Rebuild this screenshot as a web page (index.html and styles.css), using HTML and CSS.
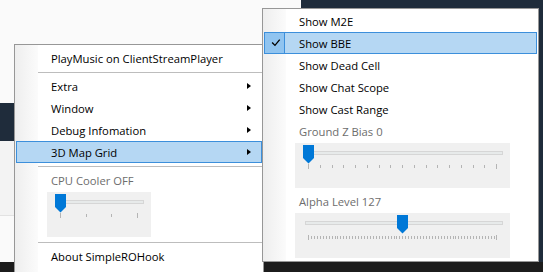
FILE: index.html
```html
<!DOCTYPE html>
<html lang="en">

<head>
	<meta charset="UTF-8">
	<meta name="viewport" content="width=device-width, initial-scale=1.0">
	<title>SimpleROHook menu</title>
	<link rel="stylesheet" href="styles.css">
</head>

<body>
	<div class="desk">
		<!-- windows behind the menus -->
		<div class="bg-band"></div>
		<div class="bg-pane"></div>
		<div class="bg-top"></div>
		<div class="bg-right"></div>
		<div class="bg-bottom"></div>

		<div class="menu main">
			<div class="item">PlayMusic on ClientStreamPlayer</div>
			<div class="sep"></div>
			<div class="item has-sub">Extra<span class="arrow"></span></div>
			<div class="item has-sub">Window<span class="arrow"></span></div>
			<div class="item has-sub">Debug Infomation<span class="arrow"></span></div>
			<div class="item has-sub hot">3D Map Grid<span class="arrow"></span></div>
			<div class="sep"></div>
			<div class="item off">CPU Cooler OFF</div>
			<div class="host">
				<div class="panel small">
					<svg width="104" height="45" viewBox="0 0 104 45">
						<rect class="track" x="10.5" y="8.5" width="86" height="3"></rect>
						<g class="ticks">
							<line x1="13.5" y1="21" x2="13.5" y2="26"></line>
							<line x1="39.5" y1="22" x2="39.5" y2="25"></line>
							<line x1="64.5" y1="22" x2="64.5" y2="25"></line>
							<line x1="90.5" y1="21" x2="90.5" y2="26"></line>
						</g>
						<path class="thumb" d="M8 2 H19 V15 L13.5 20.5 L8 15 Z"></path>
					</svg>
				</div>
			</div>
			<div class="sep"></div>
			<div class="item">About SimpleROHook</div>
		</div>

		<div class="menu submenu">
			<div class="item">Show M2E</div>
			<div class="item hot checked"><span class="check"><svg width="20" height="20" viewBox="0 0 20 20"><path d="M7.5 9.5 L10.5 12.5 L15.5 6.5"></path></svg></span>Show BBE</div>
			<div class="item">Show Dead Cell</div>
			<div class="item">Show Chat Scope</div>
			<div class="item">Show Cast Range</div>
			<div class="item off">Ground Z Bias 0</div>
			<div class="host">
				<div class="panel wide">
					<svg width="215" height="45" viewBox="0 0 215 45">
						<rect class="track" x="10.5" y="8.5" width="197" height="3"></rect>
						<g class="ticks" id="ticks-z"></g>
						<path class="thumb" d="M8 2 H19 V15 L13.5 20.5 L8 15 Z"></path>
					</svg>
				</div>
			</div>
			<div class="item off">Alpha Level 127</div>
			<div class="host">
				<div class="panel wide">
					<svg width="215" height="45" viewBox="0 0 215 45">
						<rect class="track" x="10.5" y="8.5" width="197" height="3"></rect>
						<g class="ticks" id="ticks-alpha"></g>
						<path class="thumb" d="M102 2 H113 V15 L107.5 20.5 L102 15 Z"></path>
					</svg>
				</div>
			</div>
		</div>
	</div>

	<script>
		// 刻度线
		function drawTicks(id, max, step, top) {
			var g = document.getElementById(id), html = "";
			for (var v = 0; v <= max; v += step) {
				var x = Math.round(13 + v * 188 / max) + 0.5;
				var end = v === 0 || v === max;
				html += `<line x1="${x}" y1="${end ? top - 1 : top}" x2="${x}" y2="${end ? top + 4 : top + 3}"></line>`;
			}
			if ((max % step) !== 0) {
				html += `<line x1="201.5" y1="${top - 1}" x2="201.5" y2="${top + 4}"></line>`;
			}
			g.innerHTML = html;
		}
		drawTicks("ticks-z", 16, 1, 22);
		drawTicks("ticks-alpha", 255, 4, 23);
	</script>
</body>

</html>
```

FILE: styles.css
```css
* {
	margin: 0;
	padding: 0;
	box-sizing: border-box;
}

body {
	width: 543px;
	height: 272px;
	overflow: hidden;
	background: #fafafa;
	font-family: "Open Sans", "Noto Sans", sans-serif;
	font-size: 11.25px;
	color: #000;
}

.desk {
	position: relative;
	width: 543px;
	height: 272px;
}

.bg-band {
	position: absolute;
	left: 0;
	top: 103px;
	width: 40px;
	height: 38px;
	background: #1f2c3b;
}

.bg-pane {
	position: absolute;
	left: 0;
	top: 141px;
	width: 40px;
	height: 75px;
	background: #f3f3f3;
	border-bottom: 1px solid #e2e2e2;
}

.bg-top {
	position: absolute;
	left: 301px;
	top: 0;
	width: 242px;
	height: 20px;
	background: #1f2c3b;
}

.bg-right {
	position: absolute;
	right: 0;
	top: 0;
	width: 10px;
	height: 272px;
	background: #1f2c3b;
}

.bg-bottom {
	position: absolute;
	left: 0;
	top: 262px;
	width: 543px;
	height: 10px;
	background: #1c1c1c;
}

/* menus */
.menu {
	position: absolute;
	border: 1px solid #979797;
	padding: 2px 1px 1px;
	background: linear-gradient(to right, #eeeeee 0, #fbfbfb 23px, #fff 23px);
}

.main {
	left: 14px;
	top: 44px;
	width: 250px;
	height: 240px;
}

.submenu {
	left: 262px;
	top: 8px;
	width: 277px;
	height: 254px;
	padding-top: 1px;
}

.item {
	position: relative;
	display: flex;
	align-items: center;
	height: 22px;
	padding-left: 34px;
	border: 1px solid transparent;
	white-space: nowrap;
}

.item.hot {
	background: #b5d7f3;
	border-color: #3c8fdb;
}

.item.off {
	color: #6d6d6d;
}

.arrow {
	margin-left: auto;
	margin-right: 10px;
	border-left: 4px solid #000;
	border-top: 3.5px solid transparent;
	border-bottom: 3.5px solid transparent;
}

.check {
	position: absolute;
	left: -1px;
	top: -1px;
	width: 21px;
	height: 22px;
	display: flex;
	align-items: center;
	justify-content: center;
	background: #90c4f0;
	border: 1px solid #3c8fdb;
}

.check path {
	fill: none;
	stroke: #000;
	stroke-width: 1.4;
}

.sep {
	height: 6px;
	margin-left: 22px;
	padding-top: 3px;
}

.sep::before {
	content: "";
	display: block;
	height: 1px;
	background: #bdbdbd;
}

.host {
	height: 48px;
	padding: 1px 0 0 31px;
}

.panel {
	height: 45px;
	background: #f0f0f0;
}

.panel svg {
	display: block;
}

.panel.small {
	width: 104px;
}

.panel.wide {
	width: 215px;
}

.track {
	fill: #e7eaea;
	stroke: #d6d6d6;
}

.ticks line {
	stroke: #b4b4b4;
	stroke-width: 1;
}

.thumb {
	fill: #0078d7;
}
```
